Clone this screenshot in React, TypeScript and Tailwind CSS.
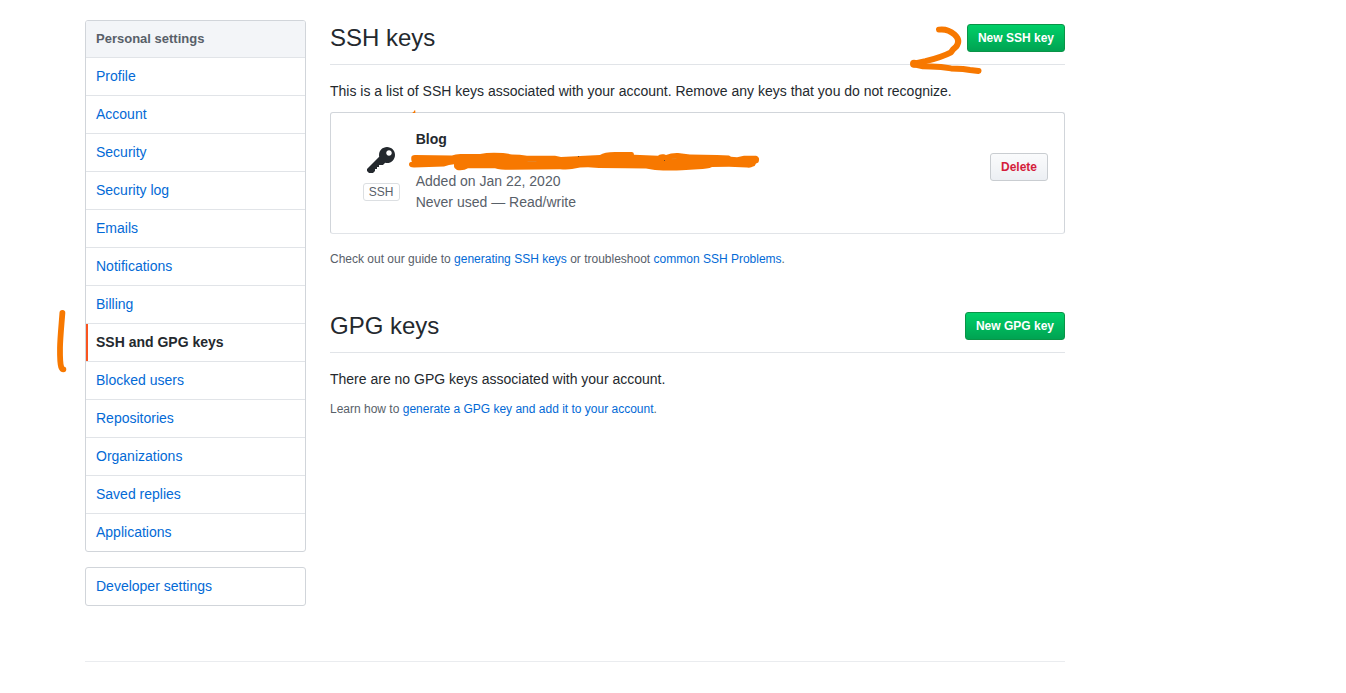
import React from "react";

const menu = [
  "Profile",
  "Account",
  "Security",
  "Security log",
  "Emails",
  "Notifications",
  "Billing",
  "SSH and GPG keys",
  "Blocked users",
  "Repositories",
  "Organizations",
  "Saved replies",
  "Applications",
];

function KeyIcon() {
  return (
    <svg className="mr-px block h-8 w-7" viewBox="0 0 14 16" fill="#24292e" aria-hidden="true">
      <path
        fillRule="evenodd"
        d="M12.83 2.17C12.08 1.42 11.14 1.03 10 1c-1.13.03-2.08.42-2.83 1.17S6.04 3.86 6.01 5c0 .3.03.59.09.89L0 12v1l1 1h2l1-1v-1h1v-1h1v-1h2l1.09-1.11c.3.08.59.11.91.11 1.14-.03 2.08-.42 2.83-1.17S13.97 6.14 14 5c-.03-1.14-.42-2.08-1.17-2.83zM11 5.38c-.77 0-1.38-.61-1.38-1.38 0-.77.61-1.38 1.38-1.38.77 0 1.38.61 1.38 1.38 0 .77-.61 1.38-1.38 1.38z"
      />
    </svg>
  );
}

function SideNav() {
  return (
    <nav className="w-[221px] shrink-0">
      <div className="overflow-hidden rounded-[3px] border border-[#d1d5da]">
        <h3 className="h-[37px] border-b border-[#e1e4e8] bg-[#f3f5f8] px-2.5 text-[13px] leading-[35px] font-bold text-[#586069]">
          Personal settings
        </h3>
        {menu.map((item) =>
          item === "SSH and GPG keys" ? (
            <a key={item} className="block h-[38px] border-b border-[#e1e4e8] text-sm leading-[37px] font-bold text-[#24292e]">
              <span className="block h-[37px] border-l-2 border-[#f9541f] pl-2">{item}</span>
            </a>
          ) : (
            <a
              key={item}
              className="block h-[38px] border-b border-[#e1e4e8] px-2.5 text-sm leading-[37px] text-[#036ad6] last:h-[37px] last:border-b-0"
            >
              {item}
            </a>
          ),
        )}
      </div>
      <div className="mt-[15px] rounded-[3px] border border-[#d1d5da]">
        <a className="block h-[37px] px-2.5 text-sm leading-[37px] text-[#036ad6]">Developer settings</a>
      </div>
    </nav>
  );
}

function SectionHead({ title, action }: { title: string; action: string }) {
  return (
    <div className="flex h-[45px] items-start justify-between border-b border-[#e1e4e8]">
      <h2 className="text-2xl leading-9 font-normal">{title}</h2>
      <button className="mt-1 h-7 rounded-[3px] border border-[#0a9447] bg-linear-to-b from-[#00d068] to-[#00a352] px-2.5 text-xs leading-[26px] font-bold whitespace-nowrap text-white">
        {action}
      </button>
    </div>
  );
}

function Marker() {
  return (
    <svg
      className="pointer-events-none absolute top-0 left-0 h-[693px] w-[1346px]"
      viewBox="0 0 1346 693"
      fill="none"
      stroke="#f77800"
      strokeLinecap="round"
      strokeLinejoin="round"
      aria-hidden="true"
    >
      <path strokeWidth="5.8" d="M62.4 312.8C61.5 325 60.2 337 60 348C59.9 358 60.2 364 61.2 367Q62 369.3 63.4 369.3" />
      <path
        strokeWidth="6"
        d="M939 29.6C945 28.8 950.5 31 954.5 34.5C959.5 39 959 43 956 46.8L953 49.5L951 52.3C944 56 934 59 925.5 61.2L914 63.8"
      />
      <path strokeWidth="6" d="M914 64.4L923 66.2L931 66.6L941 67L951 68.4L963 69L970 70L978.5 71" />
      <circle cx="914" cy="63.8" r="4" fill="#f77800" stroke="none" />
      <path
        fill="#f77800"
        stroke="none"
        d="M411.3 158Q411 155 415 155L452 155.5Q456 153.5 463 154L480 154Q486 152.8 494 152.8Q506 152.8 512 154.5Q520 154.5 527 155.8L555 155.8L561 157L576 156.2L580 156L600 155Q604 152.2 615 152L632 152Q634 152.3 634 154.8L658 155.8Q659 153.8 664 154.3L666 155Q671 152.8 678 153L690 154.5L717 155L729 155.5L731 156.7L737 157.2L744 155.8H756Q759.5 157 759 160Q759 163 756 163.5Q755 166.5 753 166.5Q751 168 747 167.5L729 166.8L712 167Q708 169 698 169.3L682 170.2Q670 171 655 170L646 168.5L625 168.2L599 168L588 167.2L580 167.5L572 169Q568 169.8 560 169.3L510 169.8Q500 169.8 495 168.2L468 168.2Q464 170.8 457 170Q453.5 168.5 454 165.5L454 164.2L449 165L444 166.5L414 167.5Q409 167.5 409 164.5Q409 161.7 412 161.7Q411 160 411.3 158Z"
      />
      <path strokeWidth="0.6" stroke="#df8c35" d="M528 161.5H536M672 159L676 158.5" />
      <path fill="#6d4520" stroke="none" d="M578 156h1v1h-1zM664 160h1v1h-1z" />
      <path fill="#f77800" stroke="none" d="M412.5 112.5L414 111.6L414 110.5L415.3 110.5L415.3 113H412.7Z" />
    </svg>
  );
}

export default function App() {
  return (
    <div className="relative h-[693px] overflow-hidden bg-white font-['Liberation_Sans',Arial,sans-serif] text-sm leading-[21px] text-[#24292e]">
      <div className="ml-[85px] w-[980px] pt-5">
        <div className="flex h-[641px] gap-6">
          <SideNav />
          <main className="w-[735px]">
            <section>
              <SectionHead title="SSH keys" action="New SSH key" />
              <p className="mt-4">
                This is a list of SSH keys associated with your account. Remove any keys that you do not recognize.
              </p>
              <div className="mt-2.5 flex h-[122px] rounded-[3px] border border-[#d1d5da] border-b-[#e1e4e8]">
                <div className="ml-8 flex w-[37px] flex-col items-center pt-8">
                  <KeyIcon />
                  <span className="mt-[6px] flex h-[18px] w-[37px] items-center justify-center rounded-[3px] border border-[#dcdfe2] pr-[0.6px] text-xs leading-none text-[#586069]">
                    SSH
                  </span>
                </div>
                <div className="ml-[15.7px] flex-1 pt-4 text-[#586069]">
                  <strong className="block font-bold text-[#24292e]">Blog</strong>
                  <p className="mt-[21px]">Added on Jan 22, 2020</p>
                  <p>Never used — Read/write</p>
                </div>
                <button className="mt-10 mr-4 h-7 rounded-[3px] border border-[#c9cdd1] bg-linear-to-b from-[#fafbfc] to-[#eceff3] px-2.5 text-xs leading-[26px] font-bold text-[#d41d3c]">
                  Delete
                </button>
              </div>
              <p className="mt-4 text-xs leading-[18px] text-[#586069]">
                Check out our guide to <a className="text-[#036ad6]">generating SSH keys</a> or troubleshoot{" "}
                <a className="text-[#036ad6]">common SSH Problems</a>.
              </p>
            </section>
            <section className="mt-10">
              <SectionHead title="GPG keys" action="New GPG key" />
              <p className="mt-4">There are no GPG keys associated with your account.</p>
              <p className="mt-2.5 text-xs leading-[18px] text-[#586069]">
                Learn how to <a className="text-[#036ad6]">generate a GPG key and add it to your account</a>.
              </p>
            </section>
          </main>
        </div>
        <div className="border-t border-[#eaecef]" />
      </div>
      <Marker />
    </div>
  );
}
